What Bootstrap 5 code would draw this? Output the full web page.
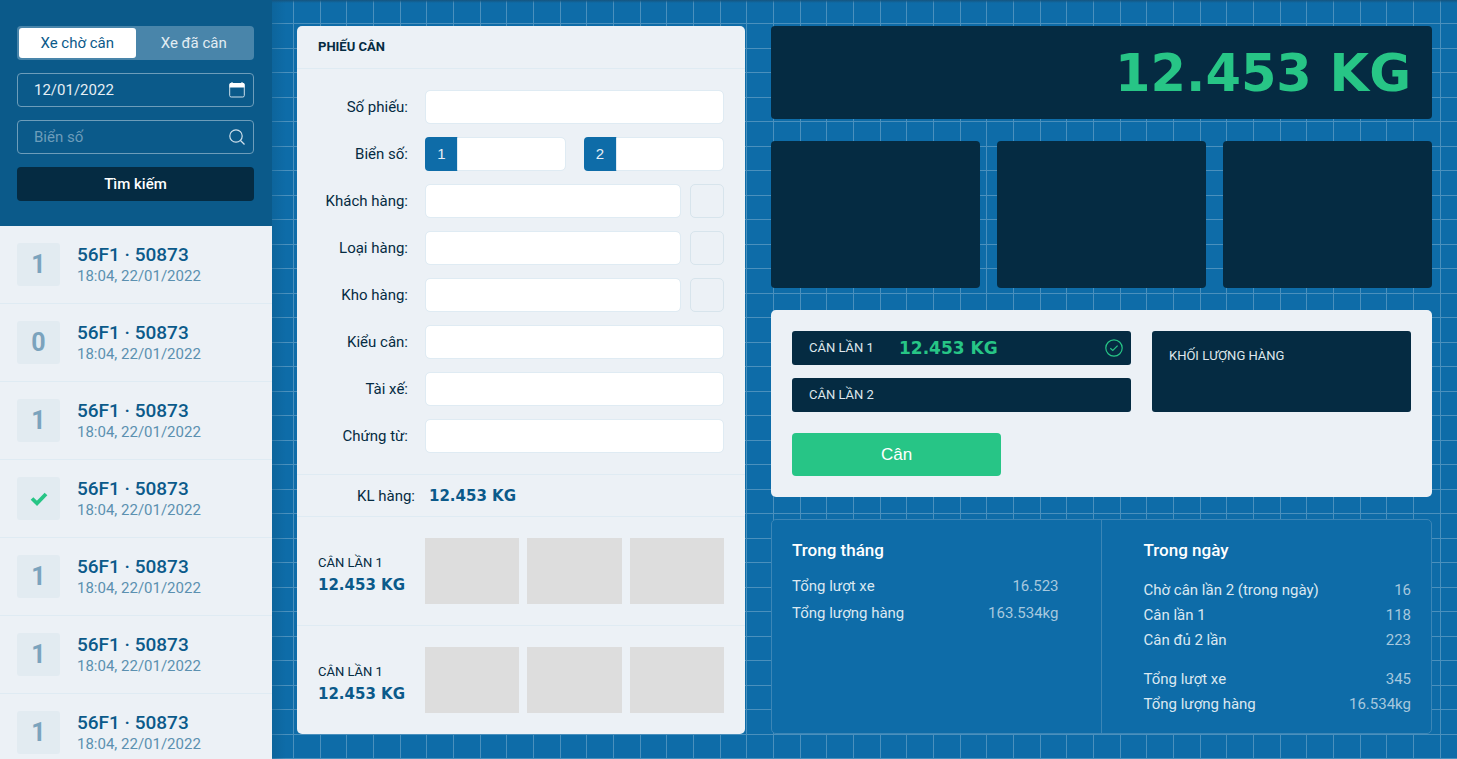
<!DOCTYPE html>
<html lang="vi">
<head>
<meta charset="utf-8">
<meta name="viewport" content="width=device-width, initial-scale=1">
<title>Phiếu cân</title>
<link rel="stylesheet" href="https://cdn.jsdelivr.net/npm/bootstrap@5.3.0/dist/css/bootstrap.min.css">
<style>
:root {
  --navy: #052b42;
  --deep: #0b5a8a;
  --blue: #0e6ca8;
  --paper: #ecf1f6;
  --edge: #dfebf3;
  --green: #27c586;
  --grid-line: #4a90bd;
}
body { font-family: Roboto, "Noto Sans", sans-serif; font-size: 15px; line-height: 20px; color: var(--navy); background: var(--blue); }
.round { border-radius: 4px; }
.digits { font-family: "DejaVu Sans", sans-serif; font-weight: 700; font-size: 15px; line-height: 22px; color: var(--deep); white-space: nowrap; }
.caption { font-size: 13px; line-height: 22px; }

/* sidebar */
.sidebar { width: 272px; height: 100vh; background: var(--paper); overflow: hidden; }
.filter { background: var(--deep); padding: 26px 18px 25px 17px; gap: 13px; }
.tabs { background: #4985aa; height: 34px; padding: 2px; }
.tabs button { flex: 1; border: 0; border-radius: 3px; background: none; color: #e3edf3; padding: 0; }
.tabs button.active { background: #fff; color: var(--deep); }
.filter .form-control { height: 34px; padding: 0 36px 0 16px; font-size: 15px; background: transparent; border: 1px solid #6d9dba; border-radius: 4px; color: #e6eff5; }
.filter .form-control::placeholder { color: #6d9dba; opacity: 1; }
.field-icon { position: absolute; right: 8px; top: 8px; width: 18px; height: 18px; pointer-events: none; }
.btn-search { height: 34px; padding: 0; font-size: 15px; font-weight: 500; background: var(--navy); color: #fff; border: 0; }
.queue li { padding: 17px; gap: 17px; border-bottom: 1px solid var(--edge); }
.turn { width: 43px; height: 43px; border-radius: 3px; background: #e2ebf1; color: #7ba3bd; font-size: 25px; font-weight: 700; }
.plate { font-size: 19px; line-height: 24px; font-weight: 500; color: var(--deep); }
.stamp { color: #5b90b0; line-height: 19px; }

/* workspace */
.workspace {
  display: grid; grid-template-columns: 448fr 661fr; gap: 26px; padding: 26px 25px 25px;
  background-color: var(--blue);
  background-image:
    linear-gradient(#16557f, transparent),
    linear-gradient(90deg, #0b5a8a66, transparent),
    linear-gradient(90deg, var(--grid-line) 1px, transparent 1px 27px, var(--grid-line) 27px 28px, transparent 28px 53px, var(--grid-line) 53px 54px, transparent 54px),
    linear-gradient(var(--grid-line) 1px, transparent 1px 25px, var(--grid-line) 25px 26px, transparent 26px);
  background-size: 100% 3px, 14px 100%, 80px 49px, 80px 49px;
  background-position: 0 0, 0 0, 21px 23px, 21px 23px;
  background-repeat: no-repeat, no-repeat, repeat, repeat;
}
.sheet { background: var(--paper); border-radius: 5px; }
.sheet-title { height: 43px; padding: 0 21px; font-size: 13px; line-height: 42px; font-weight: 700; border-bottom: 1px solid var(--edge); }
.entry { padding: 21px; gap: 13px; }
.entry label { width: 90px; flex: none; text-align: right; margin-right: 17px; white-space: nowrap; }
.entry .form-control { height: 34px; border-color: var(--edge); border-radius: 5px; padding: 0 12px; font-size: 15px; }
.entry .input-group-text { width: 33px; justify-content: center; padding: 0; border: 0; border-radius: 4px; background: var(--blue); color: #e6eff5; font-family: "Liberation Sans", sans-serif; font-size: 15px; }
.plates { gap: 18px; }
.pick { width: 34px; height: 34px; flex: none; margin-left: 9px; border: 1px solid #d7e4ec; border-radius: 5px; background: none; padding: 0; }
.net { height: 43px; border: solid var(--edge); border-width: 1px 0; padding: 0 21px; gap: 14px; }
.net-label { width: 97px; text-align: right; }
.pass { padding: 21px; }
.pass + .pass { border-top: 1px solid var(--edge); }
.pass-info { width: 107px; flex: none; padding-top: 6px; }
.shots { gap: 8px; }
.shots div { flex: 1; height: 66px; background: #ddd; }

.board { display: flex; flex-direction: column; gap: 22px; }
.dark { background: var(--navy); color: #dfe7ec; }
.readout { height: 93px; padding: 2px 21px 0; }
.readout .digits { font-size: 51px; line-height: 60px; color: var(--green); }
.cameras { gap: 17px; }
.cameras div { flex: 1; aspect-ratio: 209 / 147; }
.weigh { padding: 21px; }
.weigh-grid { display: grid; grid-template-columns: 339fr 259fr; gap: 21px; }
.slots { gap: 13px; }
.slot { height: 34px; padding: 0 8px 0 17px; border-radius: 3px; }
.slot .caption { width: 90px; }
.slot .digits { font-size: 17px; color: var(--green); }
.cargo { padding: 14px 17px; border-radius: 3px; }
.btn-weigh { width: 209px; height: 43px; margin-top: 21px; padding: 0; border: 0; background: var(--green); color: #fff; font-family: "Liberation Sans", sans-serif; font-size: 17px; }
.stats { display: grid; grid-template-columns: 1fr 1fr; flex: 1; border: 1px solid #3b86b7; border-radius: 5px; background: var(--blue); color: #dbe8f1; }
.stats section { padding: 19px 20px 15px 42px; }
.stats section:first-child { padding: 19px 42px 15px 20px; border-right: 1px solid #3b86b7; }
.stats h2 { font-size: 17px; line-height: 22px; font-weight: 500; color: #fff; margin: 0 0 16px; }
.stats section:first-child h2 { margin-bottom: 11px; }
.stats table { width: 100%; }
.stats th { font-weight: 400; padding: 0; height: 25px; }
.stats td { text-align: right; padding: 0; color: #a6c8de; }
.stats section:first-child th { height: 27px; }
.stats tbody + tbody::before { content: ""; display: block; height: 14px; }
</style>
</head>
<body>
<div class="d-flex">
  <aside class="sidebar flex-shrink-0 sticky-top">
    <form class="filter d-flex flex-column">
      <div class="tabs d-flex round">
        <button type="button" class="active">Xe chờ cân</button>
        <button type="button">Xe đã cân</button>
      </div>
      <div class="position-relative">
        <input class="form-control" type="text" value="12/01/2022" aria-label="Ngày">
        <svg class="field-icon" viewBox="0 0 18 18" fill="none"><rect x="1.7" y="2.5" width="14.6" height="13.5" rx="1.5" stroke="#cfe0eb"/><path d="M1.5 6.5V3.2Q1.5 2 2.8 2H3.5V1H4.5V2H13.5V1H14.5V2H15.2Q16.5 2 16.5 3.2V6.5Z" fill="#fff"/></svg>
      </div>
      <div class="position-relative">
        <input class="form-control" type="text" placeholder="Biển số" aria-label="Biển số">
        <svg class="field-icon" viewBox="0 0 18 18" fill="none" stroke="#cfe0eb" stroke-width="1.2"><circle cx="8" cy="8" r="6.2"/><path d="M12.5 12.5L16.5 16.5"/></svg>
      </div>
      <button type="button" class="btn btn-search round">Tìm kiếm</button>
    </form>
    <ul class="queue list-unstyled mb-0">
      <li class="d-flex align-items-center"><span class="turn d-flex align-items-center justify-content-center">1</span><div><div class="plate">56F1 · 50873</div><div class="stamp">18:04, 22/01/2022</div></div></li>
      <li class="d-flex align-items-center"><span class="turn d-flex align-items-center justify-content-center">0</span><div><div class="plate">56F1 · 50873</div><div class="stamp">18:04, 22/01/2022</div></div></li>
      <li class="d-flex align-items-center"><span class="turn d-flex align-items-center justify-content-center">1</span><div><div class="plate">56F1 · 50873</div><div class="stamp">18:04, 22/01/2022</div></div></li>
      <li class="d-flex align-items-center"><span class="turn d-flex align-items-center justify-content-center"><svg width="18" height="16" viewBox="0 0 18 16" fill="none" stroke="#27c586" stroke-width="3.8"><path d="M2 7.5L7 12.3L16 3"/></svg></span><div><div class="plate">56F1 · 50873</div><div class="stamp">18:04, 22/01/2022</div></div></li>
      <li class="d-flex align-items-center"><span class="turn d-flex align-items-center justify-content-center">1</span><div><div class="plate">56F1 · 50873</div><div class="stamp">18:04, 22/01/2022</div></div></li>
      <li class="d-flex align-items-center"><span class="turn d-flex align-items-center justify-content-center">1</span><div><div class="plate">56F1 · 50873</div><div class="stamp">18:04, 22/01/2022</div></div></li>
      <li class="d-flex align-items-center"><span class="turn d-flex align-items-center justify-content-center">1</span><div><div class="plate">56F1 · 50873</div><div class="stamp">18:04, 22/01/2022</div></div></li>
    </ul>
  </aside>

  <main class="workspace flex-grow-1 min-vh-100">
    <div class="sheet">
      <h1 class="sheet-title mb-0">PHIẾU CÂN</h1>
      <form class="entry d-flex flex-column">
        <div class="d-flex align-items-center"><label for="so">Số phiếu:</label><input class="form-control" id="so" type="text"></div>
        <div class="d-flex align-items-center"><label for="bien1">Biển số:</label>
          <div class="plates d-flex flex-fill">
            <div class="input-group"><span class="input-group-text">1</span><input class="form-control" id="bien1" type="text"></div>
            <div class="input-group"><span class="input-group-text">2</span><input class="form-control" type="text" aria-label="Biển số 2"></div>
          </div>
        </div>
        <div class="d-flex align-items-center"><label for="khach">Khách hàng:</label><input class="form-control" id="khach" type="text"><button type="button" class="pick" aria-label="Chọn khách hàng"></button></div>
        <div class="d-flex align-items-center"><label for="loai">Loại hàng:</label><input class="form-control" id="loai" type="text"><button type="button" class="pick" aria-label="Chọn loại hàng"></button></div>
        <div class="d-flex align-items-center"><label for="kho">Kho hàng:</label><input class="form-control" id="kho" type="text"><button type="button" class="pick" aria-label="Chọn kho hàng"></button></div>
        <div class="d-flex align-items-center"><label for="kieu">Kiểu cân:</label><input class="form-control" id="kieu" type="text"></div>
        <div class="d-flex align-items-center"><label for="taixe">Tài xế:</label><input class="form-control" id="taixe" type="text"></div>
        <div class="d-flex align-items-center"><label for="chungtu">Chứng từ:</label><input class="form-control" id="chungtu" type="text"></div>
      </form>
      <div class="net d-flex align-items-center"><span class="net-label">KL hàng:</span><span class="digits">12.453 KG</span></div>
      <div class="pass d-flex align-items-center">
        <div class="pass-info"><div class="caption">CÂN LẦN 1</div><div class="digits">12.453 KG</div></div>
        <div class="shots d-flex flex-fill"><div></div><div></div><div></div></div>
      </div>
      <div class="pass d-flex align-items-center">
        <div class="pass-info"><div class="caption">CÂN LẦN 1</div><div class="digits">12.453 KG</div></div>
        <div class="shots d-flex flex-fill"><div></div><div></div><div></div></div>
      </div>
    </div>

    <div class="board">
      <div class="readout dark round d-flex align-items-center justify-content-end"><span class="digits">12.453 KG</span></div>
      <div class="cameras d-flex"><div class="dark round"></div><div class="dark round"></div><div class="dark round"></div></div>
      <div class="sheet weigh">
        <div class="weigh-grid">
          <div class="slots d-flex flex-column">
            <div class="slot dark d-flex align-items-center"><span class="caption">CÂN LẦN 1</span><span class="digits">12.453 KG</span>
              <svg class="ms-auto" width="18" height="18" viewBox="0 0 18 18" fill="none" stroke="#27c586" stroke-width="1.2"><circle cx="9" cy="9" r="8.2"/><path d="M5.3 9.2L7.8 11.5L12.6 6.6"/></svg></div>
            <div class="slot dark d-flex align-items-center"><span class="caption">CÂN LẦN 2</span></div>
          </div>
          <div class="cargo dark caption">KHỐI LƯỢNG HÀNG</div>
        </div>
        <button type="button" class="btn btn-weigh round d-block">Cân</button>
      </div>
      <div class="stats">
        <section>
          <h2>Trong tháng</h2>
          <table>
            <tbody>
              <tr><th scope="row">Tổng lượt xe</th><td>16.523</td></tr>
              <tr><th scope="row">Tổng lượng hàng</th><td>163.534kg</td></tr>
            </tbody>
          </table>
        </section>
        <section>
          <h2>Trong ngày</h2>
          <table>
            <tbody>
              <tr><th scope="row">Chờ cân lần 2 (trong ngày)</th><td>16</td></tr>
              <tr><th scope="row">Cân lần 1</th><td>118</td></tr>
              <tr><th scope="row">Cân đủ 2 lần</th><td>223</td></tr>
            </tbody>
            <tbody>
              <tr><th scope="row">Tổng lượt xe</th><td>345</td></tr>
              <tr><th scope="row">Tổng lượng hàng</th><td>16.534kg</td></tr>
            </tbody>
          </table>
        </section>
      </div>
    </div>
  </main>
</div>
<script src="https://cdn.jsdelivr.net/npm/bootstrap@5.3.0/dist/js/bootstrap.bundle.min.js"></script>
</body>
</html>
